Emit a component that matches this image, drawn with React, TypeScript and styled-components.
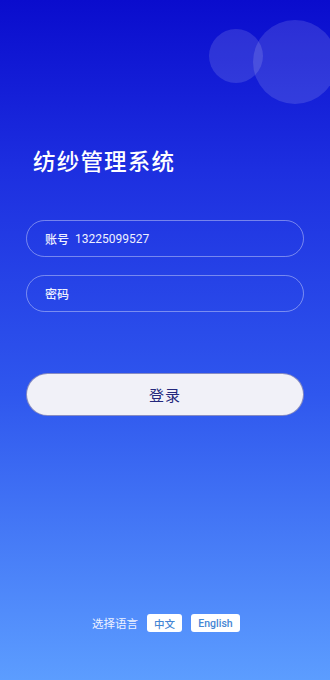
import React from "react";
import styled, { createGlobalStyle } from "styled-components";

const Global = createGlobalStyle`
  html, body { margin: 0; padding: 0; }
  body { font-family: Roboto, "Noto Sans CJK SC", sans-serif; }
  * { box-sizing: border-box; }
`;

const Page = styled.div`
  position: relative;
  width: 330px;
  height: 680px;
  overflow: hidden;
  background: linear-gradient(180deg, #0a0ccd 0%, #1d2fe0 25%, #2f57ee 58%, #5c9dff 100%);
  display: flex;
  flex-direction: column;
  padding: 0 26px 0 26px;
`;

const Bubble = styled.div<{ $x: number; $y: number; $r: number }>`
  position: absolute;
  left: ${(p) => p.$x - p.$r}px;
  top: ${(p) => p.$y - p.$r}px;
  width: ${(p) => p.$r * 2}px;
  height: ${(p) => p.$r * 2}px;
  border-radius: 50%;
  background: rgba(255, 255, 255, 0.13);
`;

const Title = styled.h1`
  margin: 146px 0 0 7px;
  font-family: "Noto Sans CJK SC", sans-serif;
  font-size: 22.5px;
  font-weight: 500;
  color: #ffffff;
  line-height: 28px;
  letter-spacing: 1.2px;
`;

const Form = styled.div`
  margin-top: 46px;
  display: flex;
  flex-direction: column;
  gap: 18px;
`;

const Field = styled.div`
  height: 37px;
  border: 1px solid rgba(255, 255, 255, 0.38);
  border-radius: 19px;
  display: flex;
  align-items: center;
  padding-left: 18px;
  gap: 6px;
`;

const Label = styled.span`
  font-family: "Noto Sans CJK SC", sans-serif;
  font-size: 12px;
  font-weight: 500;
  color: #eef0ff;
`;

const Value = styled.span`
  font-family: Roboto, sans-serif;
  font-size: 12px;
  color: #eef0ff;
`;

const Submit = styled.button`
  margin-top: 61px;
  height: 43px;
  width: 100%;
  border: 1px solid rgba(30, 40, 140, 0.5);
  border-radius: 22px;
  background: #f1f1f8;
  color: #24287c;
  font-family: "Noto Sans CJK SC", sans-serif;
  font-size: 15px;
  letter-spacing: 1px;
  cursor: pointer;
`;

const Footer = styled.div`
  margin-top: auto;
  margin-bottom: 48px;
  display: flex;
  align-items: center;
  justify-content: center;
  gap: 9px;
  padding-left: 2px;
`;

const LangLabel = styled.span`
  font-family: "Noto Sans CJK SC", sans-serif;
  font-size: 11.5px;
  color: #eef2ff;
`;

const LangTag = styled.span<{ $w: number }>`
  width: ${(p) => p.$w}px;
  height: 18px;
  background: #ffffff;
  border-radius: 3px;
  display: flex;
  align-items: center;
  justify-content: center;
  font-family: Roboto, "Noto Sans CJK SC", sans-serif;
  font-size: 10.5px;
  font-weight: 500;
  color: #4586d4;
`;

export default function App() {
  return (
    <>
      <Global />
      <Page>
        <Bubble $x={236} $y={56} $r={27} />
        <Bubble $x={295} $y={62} $r={42} />
        <Title>纺纱管理系统</Title>
        <Form>
          <Field>
            <Label>账号</Label>
            <Value>13225099527</Value>
          </Field>
          <Field>
            <Label>密码</Label>
          </Field>
        </Form>
        <Submit>登录</Submit>
        <Footer>
          <LangLabel>选择语言</LangLabel>
          <LangTag $w={35}>中文</LangTag>
          <LangTag $w={49}>English</LangTag>
        </Footer>
      </Page>
    </>
  );
}
